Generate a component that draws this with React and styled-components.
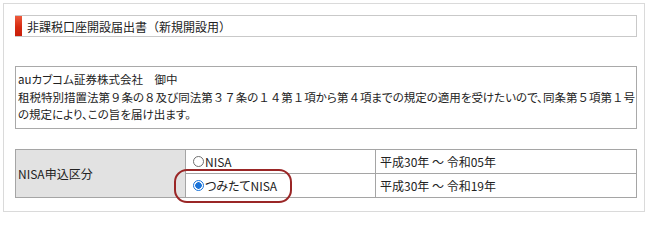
import React from "react";
import styled, { createGlobalStyle } from "styled-components";

const GlobalStyle = createGlobalStyle`
  html, body {
    margin: 0;
    padding: 0;
    background: #fff;
  }
  body {
    font-family: "Noto Sans CJK JP", "Noto Sans", sans-serif;
    color: #222;
  }
`;

const Panel = styled.div`
  box-sizing: border-box;
  margin: 3px 0 0 3px;
  width: 642px;
  height: 209px;
  border: 1px solid #dadada;
  padding: 11px 7px 0 11px;
`;

const TitleBar = styled.div`
  display: flex;
  align-items: center;
  height: 22px;
  box-sizing: border-box;
  border: 1px solid #c9c9c9;
  border-left: none;
  font-size: 12px;
`;

const Marker = styled.span`
  align-self: stretch;
  width: 7px;
  background: linear-gradient(#ee5a3c, #d62a10 55%, #c81e0a);
  margin-right: 5px;
`;

const AddressBox = styled.div`
  box-sizing: border-box;
  margin-top: 29px;
  border: 1px solid #a9a9a9;
  padding: 4px 3px 4px 2px;
  font-size: 11.5px;
  line-height: 17.5px;
  font-feature-settings: "palt";
  white-space: nowrap;
`;

// full-width digits keep their full width, as in the original form
const Wide = styled.span`
  font-feature-settings: normal;
`;

const Table = styled.table`
  margin-top: 20px;
  width: 100%;
  border-collapse: collapse;
  font-size: 12px;
  font-feature-settings: "palt";
  td {
    border: 1px solid #a5a5a5;
    height: 24px;
    padding: 0 4px;
    box-sizing: border-box;
  }
`;

const LabelCell = styled.td`
  width: 170px;
  background: #e2e2e2;
  padding-left: 2px !important;
`;

const RadioCell = styled.td`
  width: 190px;
  position: relative;
`;

const RadioLabel = styled.label`
  display: flex;
  align-items: center;
  gap: 1px;
  padding-left: 3px;
`;

const RadioDot = styled.span`
  box-sizing: border-box;
  width: 11px;
  height: 11px;
  border-radius: 50%;
  border: 1px solid ${(p) => (p.checked ? "#1a73d9" : "#6f6f6f")};
  background: ${(p) =>
    p.checked
      ? "radial-gradient(circle, #1a73d9 0 3px, #fff 3.5px)"
      : "#fff"};
`;

const Highlight = styled.span`
  position: absolute;
  left: -12px;
  top: -5px;
  width: 118px;
  height: 34px;
  box-sizing: border-box;
  border: 2px solid #9a2626;
  border-radius: 13px;
  pointer-events: none;
`;

const options = [
  { name: "NISA", period: "平成30年 ～ 令和05年", checked: false },
  { name: "つみたてNISA", period: "平成30年 ～ 令和19年", checked: true },
];

function FormText({ children }) {
  return children
    .split(/([０-９]+)/)
    .map((part, i) => (/^[０-９]+$/.test(part) ? <Wide key={i}>{part}</Wide> : part));
}

export default function App() {
  return (
    <>
      <GlobalStyle />
      <Panel>
        <TitleBar>
          <Marker />
          非課税口座開設届出書（新規開設用）
        </TitleBar>
        <AddressBox>
          auカブコム証券株式会社　御中
          <br />
          <FormText>
            租税特別措置法第９条の８及び同法第３７条の１４第１項から第４項までの規定の適用を受けたいので、同条第５項第１号
          </FormText>
          <br />
          の規定により、この旨を届け出ます。
        </AddressBox>
        <Table>
          <tbody>
            {options.map((o, i) => (
              <tr key={o.name}>
                {i === 0 && <LabelCell rowSpan={2}>NISA申込区分</LabelCell>}
                <RadioCell>
                  <RadioLabel>
                    <RadioDot checked={o.checked} />
                    {o.name}
                  </RadioLabel>
                  {o.checked && <Highlight />}
                </RadioCell>
                <td>{o.period}</td>
              </tr>
            ))}
          </tbody>
        </Table>
      </Panel>
    </>
  );
}
